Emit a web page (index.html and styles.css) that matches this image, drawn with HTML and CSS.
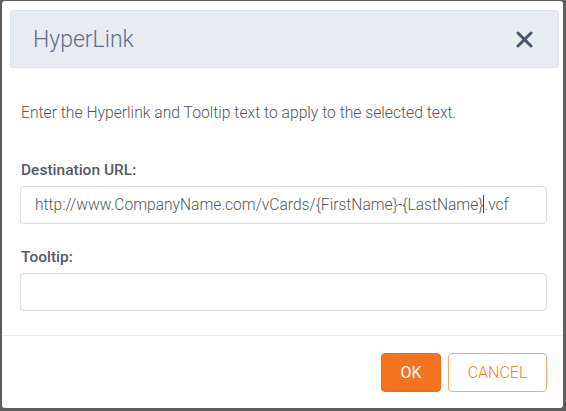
FILE: index.html
```html
<!DOCTYPE html>
<html>
<head>
<meta charset="utf-8">
<link rel="stylesheet" href="styles.css">
</head>
<body>
<div class="dialog">
  <div class="header">
    <span class="title">HyperLink</span>
    <svg class="close" width="17" height="17" viewBox="0 0 17 17"><path d="M2 2 L15 15 M15 2 L2 15" stroke="#4b5669" stroke-width="3" stroke-linecap="round"/></svg>
  </div>
  <div class="body">
    <p class="desc">Enter the Hyperlink and Tooltip text to apply to the selected text.</p>
    <label class="label first">Destination URL:</label>
    <div class="input">http://www.CompanyName.com/vCards/{FirstName}-{LastName}<span class="caret"></span>.vcf</div>
    <label class="label">Tooltip:</label>
    <div class="input"></div>
  </div>
  <div class="footer">
    <button class="btn ok">OK</button>
    <button class="btn cancel">CANCEL</button>
  </div>
</div>
</body>
</html>
```
FILE: styles.css
```css
html, body {
  margin: 0;
  padding: 0;
}
body {
  background: #5e5e5e;
  width: 566px;
  height: 411px;
  overflow: hidden;
  font-family: Roboto, "Liberation Sans", sans-serif;
}
.dialog {
  margin: 1px 0 0 2px;
  width: 561px;
  height: 407px;
  background: #fff;
  border-radius: 3px;
  display: flex;
  flex-direction: column;
}
.header {
  margin: 9px 4px 0 8px;
  height: 56px;
  background: #e8ebf2;
  border: 1px solid #dfe3ea;
  border-radius: 3px;
  display: flex;
  align-items: center;
  justify-content: space-between;
  padding: 0 25px 0 22px;
}
.title {
  font-size: 23px;
  font-weight: 300;
  color: #5c6f8e;
}
.close {
  display: block;
  margin-top: 1px;
}
.body {
  padding: 35px 16px 0 18px;
  display: flex;
  flex-direction: column;
}
.desc {
  margin: 0;
  font-size: 15.7px;
  line-height: 20px;
  font-weight: 300;
  color: #555;
  padding-left: 1px;
}
.label {
  display: block;
  font-size: 15.5px;
  line-height: 20px;
  font-weight: 500;
  color: #555b66;
  margin-top: 23px;
  padding-left: 1px;
}
.label.first {
  margin-top: 37px;
}
.input {
  margin-top: 6px;
  height: 38px;
  box-sizing: border-box;
  border: 1px solid #dcdcdc;
  border-radius: 4px;
  padding: 0 14px;
  font-size: 15.6px;
  font-weight: 300;
  line-height: 36px;
  color: #555;
  white-space: nowrap;
}
.caret {
  display: inline-block;
  width: 1px;
  height: 18px;
  background: #444;
  vertical-align: -3px;
}
.footer {
  margin-top: 24px;
  border-top: 1px solid #ececec;
  padding: 17px 16px 0 0;
  display: flex;
  justify-content: flex-end;
  gap: 7px;
}
.btn {
  height: 39px;
  box-sizing: border-box;
  border-radius: 4px;
  font-family: Roboto, "Liberation Sans", sans-serif;
  font-size: 16px;
  font-weight: 400;
  padding: 0;
}
.ok {
  width: 60px;
  background: #f37321;
  border: 1px solid #ee6e1c;
  color: #fff;
}
.cancel {
  width: 99px;
  background: #fff;
  border: 1px solid #f6a873;
  color: #f37a2e;
  font-weight: 300;
}
```
